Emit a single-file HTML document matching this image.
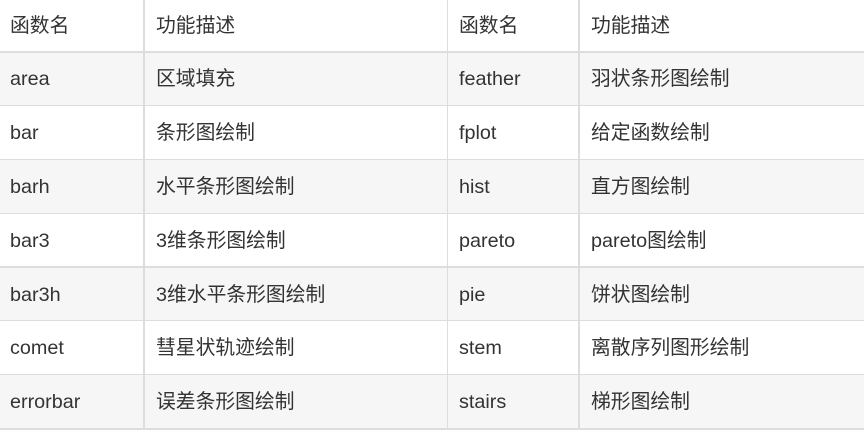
<!DOCTYPE html>
<html><head><meta charset="utf-8"><style>
body{margin:0;width:864px;height:430px;background:#fff;position:relative;overflow:hidden;font-family:"Liberation Sans","Noto Sans CJK SC",sans-serif;font-size:19.8px;color:#333}
.r{position:absolute;left:0;width:864px}
.g{background:#f6f6f6}
.h{position:absolute;left:0;width:864px;background:#ddd}
.v{position:absolute;top:0;height:430px;background:#ddd}
.t{position:absolute;white-space:nowrap;line-height:20px}
</style></head><body>
<div class="r g" style="top:53px;height:52px"></div>
<div class="r g" style="top:160px;height:53px"></div>
<div class="r g" style="top:268px;height:52px"></div>
<div class="r g" style="top:375px;height:53px"></div>
<div class="h" style="top:51px;height:2px"></div>
<div class="h" style="top:105px;height:1px"></div>
<div class="h" style="top:159px;height:1px"></div>
<div class="h" style="top:213px;height:1px"></div>
<div class="h" style="top:266px;height:2px"></div>
<div class="h" style="top:320px;height:1px"></div>
<div class="h" style="top:374px;height:1px"></div>
<div class="h" style="top:428px;height:2px"></div>
<div class="v" style="left:143px;width:2px"></div>
<div class="v" style="left:447px;width:1px"></div>
<div class="v" style="left:578px;width:2px"></div>
<div class="t" style="left:10px;top:16px">函数名</div><div class="t" style="left:156px;top:16px">功能描述</div><div class="t" style="left:459px;top:16px">函数名</div><div class="t" style="left:591px;top:16px">功能描述</div>
<div class="t" style="left:10px;top:69px">area</div><div class="t" style="left:156px;top:69px">区域填充</div><div class="t" style="left:459px;top:69px">feather</div><div class="t" style="left:591px;top:69px">羽状条形图绘制</div>
<div class="t" style="left:10px;top:123px">bar</div><div class="t" style="left:156px;top:123px">条形图绘制</div><div class="t" style="left:459px;top:123px">fplot</div><div class="t" style="left:591px;top:123px">给定函数绘制</div>
<div class="t" style="left:10px;top:177px">barh</div><div class="t" style="left:156px;top:177px">水平条形图绘制</div><div class="t" style="left:459px;top:177px">hist</div><div class="t" style="left:591px;top:177px">直方图绘制</div>
<div class="t" style="left:10px;top:231px">bar3</div><div class="t" style="left:156px;top:231px">3维条形图绘制</div><div class="t" style="left:459px;top:231px">pareto</div><div class="t" style="left:591px;top:231px">pareto图绘制</div>
<div class="t" style="left:10px;top:285px">bar3h</div><div class="t" style="left:156px;top:285px">3维水平条形图绘制</div><div class="t" style="left:459px;top:285px">pie</div><div class="t" style="left:591px;top:285px">饼状图绘制</div>
<div class="t" style="left:10px;top:338px">comet</div><div class="t" style="left:156px;top:338px">彗星状轨迹绘制</div><div class="t" style="left:459px;top:338px">stem</div><div class="t" style="left:591px;top:338px">离散序列图形绘制</div>
<div class="t" style="left:10px;top:392px">errorbar</div><div class="t" style="left:156px;top:392px">误差条形图绘制</div><div class="t" style="left:459px;top:392px">stairs</div><div class="t" style="left:591px;top:392px">梯形图绘制</div>
</body></html>
